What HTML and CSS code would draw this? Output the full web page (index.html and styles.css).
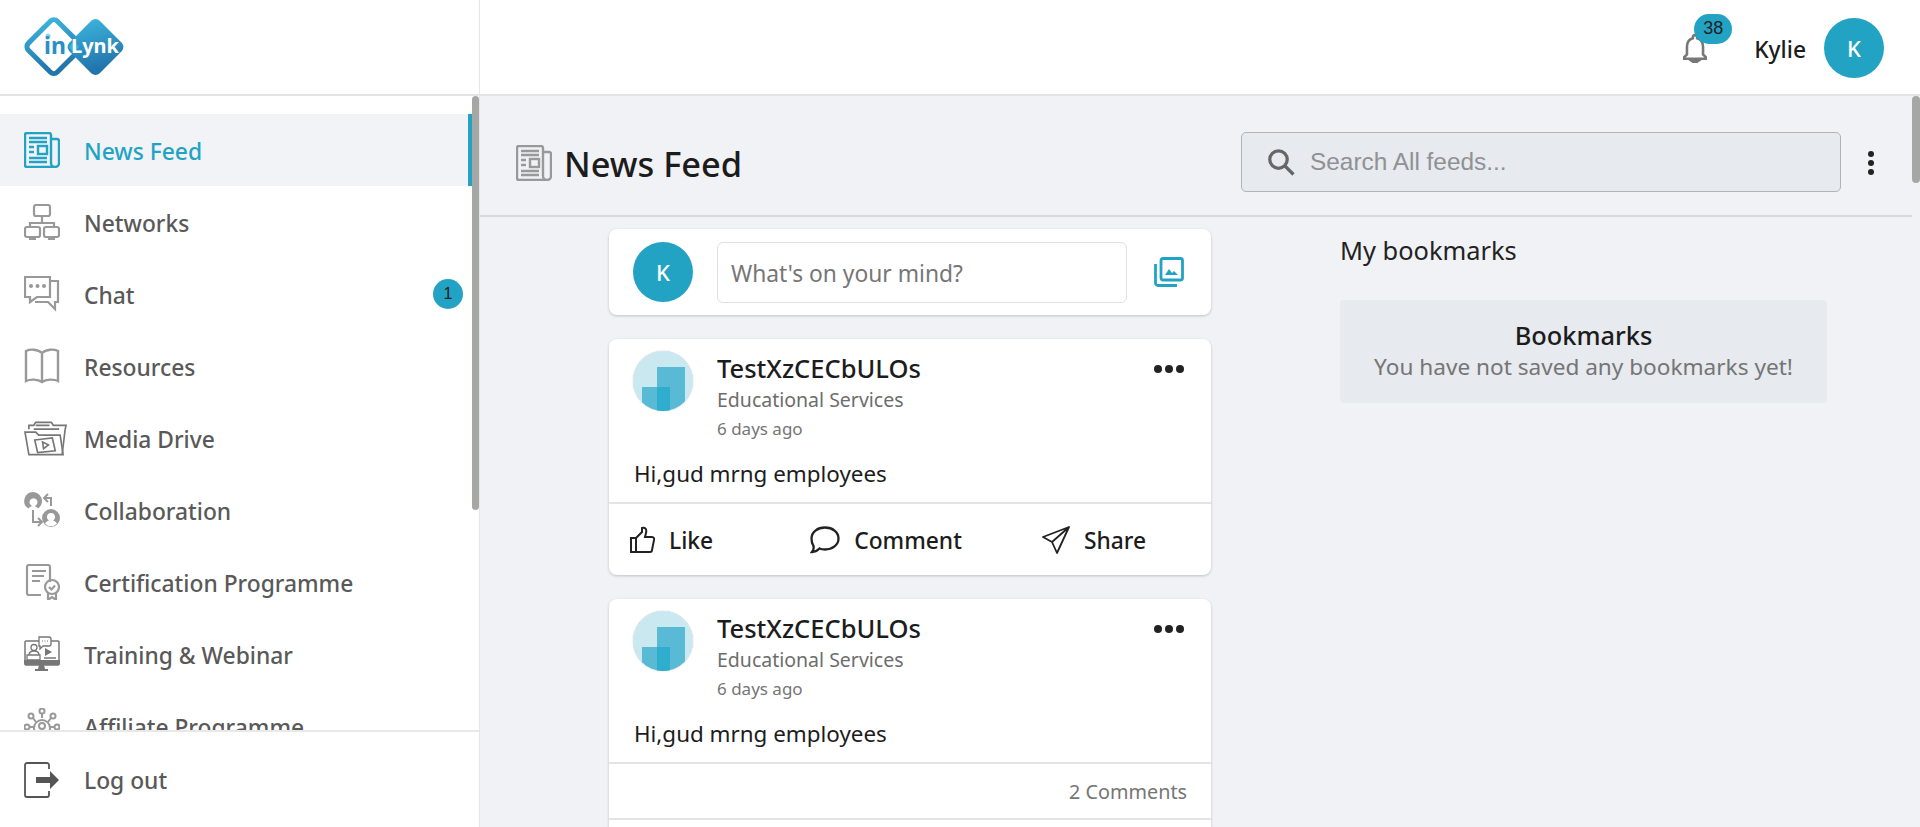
FILE: index.html
```html
<!DOCTYPE html>
<html lang="en">
<head>
<meta charset="utf-8">
<title>News Feed</title>
<link rel="stylesheet" href="styles.css">
</head>
<body>
<svg class="defs" width="0" height="0" aria-hidden="true">
  <defs>
    <linearGradient id="logoA" x1="0" y1="0" x2="1" y2="0.6"><stop offset="0" stop-color="#3cb4dc"/><stop offset="1" stop-color="#2276ad"/></linearGradient>
    <g id="news-icon" fill="none" stroke="currentColor" stroke-width="2.400">
      <path d="M27 7h6a2 2 0 0 1 2 2v22a4 4 0 0 1-8 0V3a2 2 0 0 0-2-2H3a2 2 0 0 0-2 2v30a2 2 0 0 0 2 2h28"/>
      <path d="M5 6h18M5 10h18M5 15h5M5 20h5M5 26h18M5 30h18"/>
      <rect x="14" y="14" width="9" height="8"/>
    </g>
  </defs>
</svg>
<div class="app">
  <aside class="sidebar">
    <div class="logo-bar">
      <svg class="logo" viewBox="0 0 102 60" width="102" height="60">
        <rect x="9" y="9" width="41" height="41" rx="5" transform="rotate(45 29.5 30)" fill="#fff" stroke="url(#logoA)" stroke-width="5"/>
        <rect x="50" y="8.500" width="43" height="43" rx="6" transform="rotate(45 71.500 30)" fill="url(#logoA)"/>
        <path d="M50 24l-5 6 5 6 5-6z" fill="#3cb4dc"/>
        <circle cx="24" cy="19" r="2.500" fill="#8fd3ea"/>
        <text class="logo-in" x="20" y="37">in</text>
        <text class="logo-lynk" x="47" y="36">Lynk</text>
      </svg>
    </div>
    <nav class="menu">
      <a class="item active"><svg class="ic" viewBox="0 0 36 36"><use href="#news-icon"/></svg><span>News Feed</span></a>
      <a class="item"><svg class="ic" viewBox="0 0 36 36"><g fill="none" stroke="currentColor" stroke-width="2.200"><rect x="10" y="1" width="16" height="11" rx="2"/><path d="M18 12v7M6 23v-4h24v4"/><rect x="1" y="23" width="15" height="10" rx="2"/><rect x="20" y="23" width="15" height="10" rx="2"/><path d="M5 35h7M24 35h7" stroke-width="2.500"/></g></svg><span>Networks</span></a>
      <a class="item"><svg class="ic" viewBox="0 0 36 36"><g fill="none" stroke="currentColor" stroke-width="2.200"><path d="M1 1h25v20H13l-7 5v-5H1z"/><path d="M26 5h8v21h-3v7l-7-7H11"/></g><g fill="currentColor"><circle cx="7" cy="10" r="2"/><circle cx="13.500" cy="10" r="2"/><circle cx="20" cy="10" r="2"/></g></svg><span>Chat</span><b class="count">1</b></a>
      <a class="item"><svg class="ic" viewBox="0 0 36 36"><path d="M18 5C14 1 6 1 2 3v30c4-2 12-2 16 1 4-3 12-3 16-1V3c-4-2-12-2-16 2zV34" fill="none" stroke="currentColor" stroke-width="2.400"/></svg><span>Resources</span></a>
      <a class="item"><svg class="ic wide dark" viewBox="0 0 44 36"><g fill="none" stroke="currentColor" stroke-width="1.700"><path d="M1 12h11l3 3h22l3 20H5z"/><path d="M5 9V5h5l2-3h16l2 3h8l5 0-1 5-3 25"/><path d="M10 9h26M12 5h14"/><path d="M11 20l18-2 3 13-18 2z"/><path d="M19 22l6 3-5 4z"/></g></svg><span>Media Drive</span></a>
      <a class="item"><svg class="ic" viewBox="0 0 36 36"><g fill="currentColor"><path fill-rule="evenodd" d="M9 0a9 9 0 0 1 9 9 9 9 0 0 1-4 7.500c-1-1.500-2.500-2-3-2.500a4 4 0 1 0-3 0C7 14.500 5 15.500 4.300 16.500A9 9 0 0 1 9 0z"/><path fill-rule="evenodd" d="M27 17a9 9 0 0 1 9 9 9 9 0 0 1-18 0 9 9 0 0 1 9-9zm0 4a4 4 0 0 0-2 7.500c-2 .5-3 1.500-4 3a8 8 0 0 0 12 0c-1-1.500-2-2.500-4-3a4 4 0 0 0-2-7.500z"/></g><g fill="none" stroke="currentColor" stroke-width="2"><path d="M9 18v12h8M14 26l4 4-4 4"/><path d="M27 14V6h-6M24 2l-4 4 4 4" /></g></svg><span>Collaboration</span></a>
      <a class="item"><svg class="ic" viewBox="0 0 36 36"><g fill="none" stroke="currentColor" stroke-width="2.200"><path d="M17 31H5a2 2 0 0 1-2-2V3a2 2 0 0 1 2-2h19a2 2 0 0 1 2 2v15"/><path d="M8 7h14M8 12h12M8 17h8"/><circle cx="28" cy="23" r="7"/><path d="M24 29v7l4-3 4 3v-7"/><path d="M25 23l2.500 2.500 3.500-4"/></g></svg><span>Certification Programme</span></a>
      <a class="item"><svg class="ic dark" viewBox="0 0 36 36"><rect x="1" y="5" width="34" height="24" rx="1" fill="none" stroke="currentColor" stroke-width="1.500"/><path d="M0 24h36v3a2 2 0 0 1-2 2H2a2 2 0 0 1-2-2zM15 29h5l1 4h3v2H11v-2h3z" fill="currentColor"/><g fill="none" stroke="currentColor" stroke-width="1.300"><circle cx="10" cy="11.500" r="3"/><path d="M5 19c0-3 2-4 5-4s5 1 5 4M3 19h13v5H3zM20 22h12"/><path d="M15 1h10a2 2 0 0 1 2 2v5a2 2 0 0 1-2 2H19l-3 3v-3h-1z" fill="#fff"/></g><path d="M21 12l7 4-7 4z" fill="currentColor"/><path d="M18 5h1M20.500 5h1M23 5h1" stroke="currentColor" stroke-width="1"/></svg><span>Training &amp; Webinar</span></a>
      <a class="item"><svg class="ic" viewBox="0 0 36 36"><g fill="none" stroke="currentColor" stroke-width="2"><circle cx="18" cy="3" r="2.500"/><circle cx="7" cy="8" r="2.500"/><circle cx="29" cy="8" r="2.500"/><circle cx="3" cy="19" r="2.500"/><circle cx="33" cy="19" r="2.500"/><circle cx="18" cy="20" r="8"/><circle cx="18" cy="18" r="3"/><path d="M18 6v4M9 10l3 4M27 10l-3 4M6 19h4M30 19h-4"/></g></svg><span>Affiliate Programme</span></a>
    </nav>
    <a class="item logout"><svg class="ic" viewBox="0 0 36 36"><path d="M25 7V3a2 2 0 0 0-2-2H3a2 2 0 0 0-2 2v30a2 2 0 0 0 2 2h20a2 2 0 0 0 2-2v-4" fill="none" stroke="#555" stroke-width="1.800"/><path d="M12 15h14V9l9 9-9 9v-6H12z" fill="#555"/></svg><span>Log out</span></a>
    <i class="thumb side-thumb"></i>
  </aside>
  <div class="right">
    <header class="topbar">
      <div class="bell">
        <svg viewBox="0 0 24 28" width="26" height="30"><path d="M12 2a2 2 0 0 1 2 2v1c4 1 5.500 4 5.500 8v7l2.500 2.500V24H2v-1.500L4.500 20v-7c0-4 1.500-7 5.500-8V4a2 2 0 0 1 2-2zM9 26h6l-3 2z" fill="none" stroke="#777" stroke-width="2.400"/></svg>
        <b class="bell-count">38</b>
      </div>
      <span class="user">Kylie</span>
      <span class="avatar">K</span>
    </header>
    <main class="main">
      <div class="title-row">
        <svg class="title-ic" viewBox="0 0 36 36"><use href="#news-icon"/></svg>
        <h1>News Feed</h1>
        <div class="search">
          <svg viewBox="0 0 24 24" width="30" height="30"><circle cx="10" cy="10" r="7" fill="none" stroke="#666" stroke-width="2.600"/><path d="M15 15l7 7" stroke="#666" stroke-width="2.600"/></svg>
          <span>Search All feeds...</span>
        </div>
        <div class="kebab"><i></i><i></i><i></i></div>
      </div>
      <div class="columns">
        <section class="feed">
          <div class="card composer">
            <span class="avatar">K</span>
            <div class="mind">What's on your mind?</div>
            <svg viewBox="0 0 30 30" width="30" height="30"><g fill="none" stroke="#22a3c4" stroke-width="2.800"><rect x="7" y="1.500" width="21.500" height="21.500" rx="2"/><path d="M1.500 7v19a2.500 2.500 0 0 0 2.500 2.500h19"/></g><path d="M11 18l4-6 3 4 2-2 4 4z" fill="#22a3c4"/></svg>
          </div>
          <article class="card post">
            <div class="post-head">
              <svg class="org" viewBox="0 0 60 60"><defs><clipPath id="orgClip"><circle cx="30" cy="30" r="30"/></clipPath></defs><circle cx="30" cy="30" r="30" fill="#c9e8f0"/><g clip-path="url(#orgClip)"><rect x="24" y="16" width="28" height="44" fill="#58bad5"/><rect x="9" y="36" width="28" height="24" fill="#58bad5"/><rect x="24" y="36" width="13" height="24" fill="#2fadcd"/></g></svg>
              <div class="who"><h2>TestXzCECbULOs</h2><p class="org-type">Educational Services</p><p class="ago">6 days ago</p></div>
              <div class="more"><i></i><i></i><i></i></div>
            </div>
            <p class="body">Hi,gud mrng employees</p>
            <div class="actions">
              <a class="act act-like"><svg viewBox="0 0 26 28" width="26" height="28"><path d="M7 12h-5v14h5zM7 12l6-6V2c3-1 5 1 4 5l-1 4h7c2 0 2.500 2 2 3l-2 10c0 1.500-1 2-2 2H7" fill="none" stroke="#222" stroke-width="2"/></svg><span>Like</span></a>
              <a class="act act-comment"><svg viewBox="0 0 30 28" width="30" height="28"><path d="M15 1.500c7.500 0 13.500 4.500 13.500 11S22.500 23.500 15 23.500c-2 0-4-.3-5.500-1-1.500 1.500-4 3.500-7.500 3.500 1.500-2 2-4 1.500-6C2 18 1.500 15.500 1.500 12.500 1.500 6 7.500 1.500 15 1.500z" fill="none" stroke="#222" stroke-width="2.300"/></svg><span>Comment</span></a>
              <a class="act act-share"><svg viewBox="0 0 28 28" width="28" height="28"><path d="M27 1L1 11l9 5 5 11zM27 1L10 16" fill="none" stroke="#222" stroke-width="1.800" stroke-linejoin="round"/></svg><span>Share</span></a>
            </div>
          </article>
          <article class="card post">
            <div class="post-head">
              <svg class="org" viewBox="0 0 60 60"><circle cx="30" cy="30" r="30" fill="#c9e8f0"/><g clip-path="url(#orgClip)"><rect x="24" y="16" width="28" height="44" fill="#58bad5"/><rect x="9" y="36" width="28" height="24" fill="#58bad5"/><rect x="24" y="36" width="13" height="24" fill="#2fadcd"/></g></svg>
              <div class="who"><h2>TestXzCECbULOs</h2><p class="org-type">Educational Services</p><p class="ago">6 days ago</p></div>
              <div class="more"><i></i><i></i><i></i></div>
            </div>
            <p class="body">Hi,gud mrng employees</p>
            <div class="comment-count">2 Comments</div>
            <div class="actions"></div>
          </article>
        </section>
        <section class="marks">
          <h3>My bookmarks</h3>
          <div class="marks-box"><h4>Bookmarks</h4><p>You have not saved any bookmarks yet!</p></div>
        </section>
      </div>
      <i class="thumb main-thumb"></i>
    </main>
  </div>
</div>
</body>
</html>
```
FILE: styles.css
```css
* { box-sizing: border-box; }
html, body { margin: 0; height: 100%; overflow: hidden; }
body { font-family: "Noto Sans", "Open Sans", sans-serif; color: #1c1c1c; background: #fff; }
.defs { position: absolute; }
p, h1, h2, h3, h4 { margin: 0; font-weight: 400; }
.app { display: flex; height: 827px; }

.sidebar { position: relative; width: 480px; flex: none; display: flex; flex-direction: column; border-right: 1px solid #e6e6e6; }
.logo-bar { height: 96px; flex: none; padding: 17px 0 0 24px; border-bottom: 2px solid #e4e4e4; }
.logo { display: block; overflow: visible; }
.logo-in { font: 700 23px "Noto Sans", sans-serif; fill: #2a8fc4; }
.logo-lynk { font: 700 20px "Noto Sans", sans-serif; fill: #fff; }
.menu { flex: 1; min-height: 0; overflow: hidden; padding: 18px 7px 0 0; }
.item { display: flex; align-items: center; height: 72px; padding-left: 24px; font-size: 22.800px; font-weight: 500; color: #595959; }
.item span { margin-left: 24px; padding-top: 2px; }
.ic { width: 36px; height: 36px; color: #999; flex: none; }
.ic.dark { color: #777; }
.ic.wide { width: 43px; margin-right: -7px; }
.active { background: #f1f3f7; color: #22a3c4; border-right: 4px solid #22a3c4; }
.active .ic { color: #22a3c4; }
.count { width: 30px; height: 30px; margin-left: auto; margin-right: 9px; border-radius: 50%; background: #22a3c4; color: #222; font: 400 16px/30px "Liberation Sans", sans-serif; text-align: center; }
.logout { height: 97px; flex: none; border-top: 2px solid #e8e8e8; }
.thumb { position: absolute; display: block; width: 7px; background: #a5a7a5; border-radius: 4px; }
.side-thumb { top: 96px; right: 0; height: 414px; }

.right { flex: 1; min-width: 0; display: flex; flex-direction: column; }
.topbar { height: 96px; flex: none; display: flex; align-items: center; padding: 2px 36px 0 0; background: #fff; border-bottom: 2px solid #e4e4e4; }
.bell { position: relative; margin-left: auto; width: 26px; height: 30px; margin-right: 47px; transform: translateX(1px); }
.bell svg { display: block; }
.bell-count { position: absolute; left: 12px; top: -19px; width: 38px; height: 30px; border-radius: 15px; background: #22a3c4; color: #222; font: 400 18px/28px "Liberation Sans", sans-serif; text-align: center; }
.user { font-size: 22.800px; font-weight: 500; margin-right: 18px; padding-top: 2px; }
.avatar { width: 60px; height: 60px; flex: none; border-radius: 50%; background: #22a3c4; color: #fff; font-size: 22px; font-weight: 500; display: flex; align-items: center; justify-content: center; }

.main { position: relative; flex: 1; min-height: 0; overflow: hidden; background: #f0f2f6; }
.title-row { height: 121px; margin-right: 8px; display: flex; align-items: center; padding: 15px 0 0 36px; border-bottom: 2px solid #d8d9dd; }
.title-ic { width: 36px; height: 36px; color: #999; margin-top: -1px; }
h1 { font-size: 34.400px; font-weight: 500; margin-left: 12px; }
.search { display: flex; align-items: center; width: 600px; height: 60px; margin-left: auto; margin-top: -2px; padding-left: 24px; border: 1px solid #b0b3b8; border-radius: 5px; background: #e7eaee; font: 400 24.400px "Liberation Sans", sans-serif; color: #8f9194; }
.search span { margin-left: 14px; }
.kebab { display: flex; flex-direction: column; gap: 3px; margin: 0 38px 0 27px; }
.kebab i, .more i { display: block; width: 6px; height: 6px; border-radius: 50%; background: #222; }

.columns { display: grid; grid-template-columns: 602px 487px; gap: 129px; padding: 12px 0 0 129px; }
.card { background: #fff; border-radius: 8px; box-shadow: 0 1px 3px rgba(0,0,0,.2); margin-bottom: 24px; }
.composer { height: 86px; display: flex; align-items: center; padding: 0 27px 0 24px; }
.mind { width: 410px; height: 61px; margin: 0 27px 0 24px; padding-left: 13px; border: 1px solid #dfe0e2; border-radius: 6px; font-size: 22.800px; line-height: 61px; color: #767676; }
.post { padding-top: 12px; overflow: hidden; }
.post-head { display: flex; padding: 0 27px 0 24px; }
.org { width: 60px; height: 60px; flex: none; border-radius: 50%; box-shadow: 0 0 1px #888; }
.who { margin-left: 24px; margin-top: -1px; }
h2 { font-size: 25.500px; font-weight: 500; line-height: 36px; }
.org-type { font-size: 19.500px; line-height: 26px; margin-top: 1px; color: #6d6d6d; }
.ago { font-size: 17px; line-height: 24px; margin-top: 4px; color: #757575; }
.more { display: flex; gap: 3px; margin-left: auto; margin-top: 14px; }
.more i { width: 8px; height: 8px; }
.body { margin: 19px 25px 0 25px; height: 28px; font-size: 22.400px; line-height: 28px; }
.actions { height: 73px; margin-top: 14px; display: flex; align-items: center; border-top: 2px solid #e4e4e4; font-size: 22.800px; font-weight: 500; }
.act { display: flex; align-items: center; gap: 14px; }
.act span { padding-top: 2px; }
.act-like { margin-left: 20px; }
.act-comment { margin-left: 97px; }
.act-share { margin-left: 80px; }
.comment-count { height: 56px; margin-top: 14px; padding-right: 24px; border-top: 2px solid #e4e4e4; text-align: right; font-size: 19.800px; line-height: 56px; color: #757575; }
.comment-count + .actions { margin-top: 0; }

.marks h3 { font-size: 25.400px; line-height: 34px; margin-bottom: 33px; margin-top: 4px; color: #222; }
.marks-box { height: 103px; padding-top: 18px; border-radius: 4px; background: #e7eaee; text-align: center; }
h4 { font-size: 25.400px; font-weight: 500; line-height: 34px; }
.marks-box p { font-size: 22.600px; line-height: 30px; color: #757575; }
.main-thumb { top: 0; right: 0; height: 87px; width: 8px; }
```
